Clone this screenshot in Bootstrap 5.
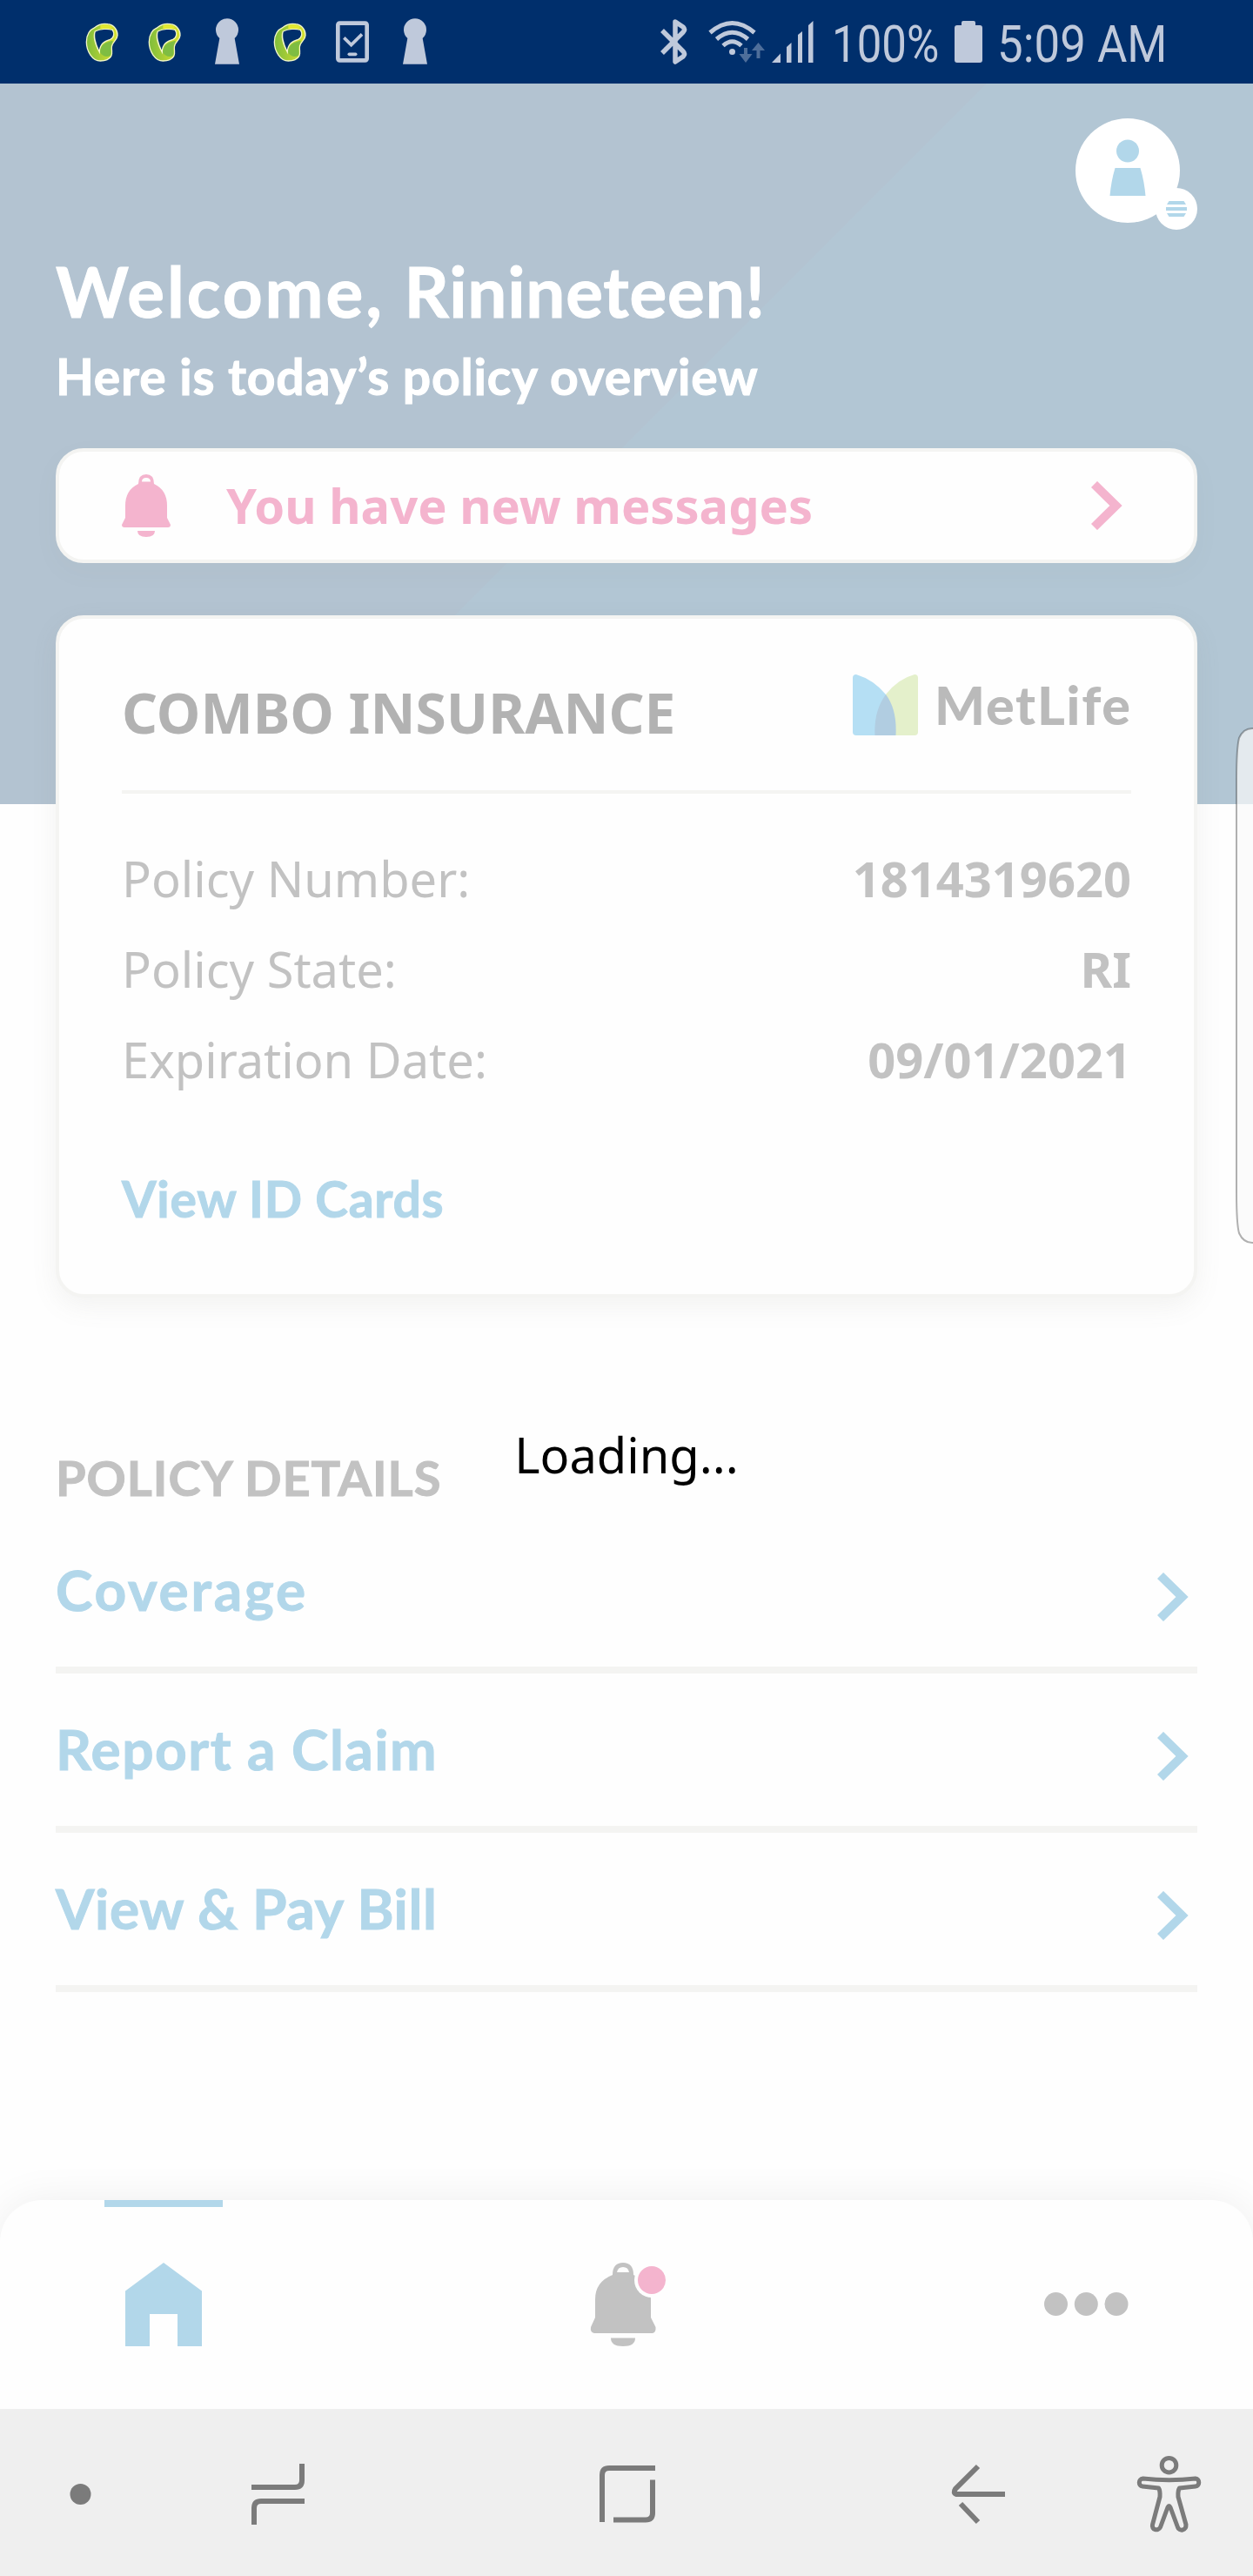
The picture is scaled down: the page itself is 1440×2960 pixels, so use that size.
<!DOCTYPE html>
<html lang="en">
<head>
<meta charset="utf-8">
<meta name="viewport" content="width=device-width, initial-scale=1">
<title>Policy overview</title>
<link href="https://cdn.jsdelivr.net/npm/bootstrap@5.3.0/dist/css/bootstrap.min.css" rel="stylesheet">
<style>
:root{--sky:#b2d7ea;--pink:#f4b4ce;--line:#f4f4f2;--grey:#c2c2c2;--status:#bfc9db}
body{background:#fefefe;font-family:"Noto Sans",sans-serif;font-size:56px;line-height:72px;color:#000}
.screen{width:1440px;height:2960px;overflow:hidden}
svg{display:block;flex:none}
.brand-font{font-family:Lato,sans-serif;font-weight:700;-webkit-text-stroke:1px currentColor}
.statusbar{height:96px;background:#002f6c;color:var(--status);padding-left:81px}
.status-txt{font:400 60px/96px Roboto,sans-serif;transform:scaleX(.85);transform-origin:0 50%;white-space:nowrap}
.pct{width:141px;margin-left:14px;margin-top:3px}
.clock{width:200px;margin-left:17px;margin-top:3px;transform:scaleX(.88)}
.hero{height:828px;padding:40px 64px 0;background:linear-gradient(135deg,#b3c3d1 49.95%,#b2c6d4 50.02%)}
.hero h1{font-size:80px;line-height:96px;margin:30px 0 0;white-space:nowrap;letter-spacing:.8px}
.hero h1 .greet{letter-spacing:3px}
.hero p{font-size:57px;line-height:72px;margin:14px 0 0;white-space:nowrap;letter-spacing:.8px}
.content{padding:0 64px;margin-top:-409px}
.panel{background:#fefefe;border:4px solid var(--line);border-radius:32px;box-shadow:0 10px 30px rgba(120,120,110,.09)}
.message{height:132px;color:var(--pink);padding:0 82px 0 72px;box-shadow:0 10px 30px rgba(120,120,110,.04)}
.message strong{margin-left:64px;padding-bottom:2px}
.policy{height:784px;margin-top:60px;padding:0 72px}
.policy-head{height:201px;border-bottom:4px solid var(--line)}
.policy-head h2{font-size:64px;line-height:80px;font-weight:700;color:#b2b2b2;padding-top:19px;margin:0}
.metlife{font-family:Lato,sans-serif;font-weight:900;font-size:61px;color:#bababa}
.metlife-name{margin:0 -3px 0 19px;letter-spacing:1.8px;width:229px}
.facts{margin:45px 0 0;color:var(--grey);line-height:104px}
.facts dt{font-weight:400}.facts dd{margin:0;font-weight:700}
.idlink{font-size:57px;color:var(--sky);margin-top:72px;text-decoration:none;letter-spacing:.7px}
.details-title{font-size:56px;line-height:72px;margin:171px 0 6px;color:var(--grey);letter-spacing:.95px}
.menu-row{height:183px;border-bottom:8px solid var(--line);font-size:64px;color:var(--sky);text-decoration:none}
.menu-row span{padding-bottom:1px}
.menu-row svg{margin:14px 10px 0 0}
.track-wide{letter-spacing:2.8px}
.track-mid{letter-spacing:1.5px}
.track-slim{letter-spacing:.6px}
.tabs{height:240px;background:#fefefe;border-radius:48px 48px 0 0;box-shadow:0 0 48px rgba(0,0,0,.065);padding:0 124px 0 120px}
.sysbar{height:192px;background:#efefef}
.loading{top:1635px;left:0;width:1440px}
.edge{left:1420px;top:836px}
</style>
</head>
<body>
<div class="screen position-relative d-flex flex-column">
  <header class="statusbar d-flex flex-shrink-0">
    <svg width="0" height="0" class="position-absolute">
      <defs>
        <linearGradient id="lime" x1="0" y1="0" x2="1" y2="0"><stop offset="0" stop-color="#7fbd3c"/><stop offset=".45" stop-color="#a9cd36"/><stop offset="1" stop-color="#d9e22e"/></linearGradient>
        <symbol id="leaf" viewBox="63 0 216 288">
          <path fill-rule="evenodd" fill="url(#lime)" stroke="#f3f7c8" stroke-width="4" d="M148 94C160 84 176 80 192 83C214 86 226 104 225 122C224 140 206 144 205 162C204 176 209 182 203 194C196 206 182 210 166 210C138 210 118 176 118 145C118 120 130 102 148 94ZM148 108C142 122 147 150 163 180C164 150 180 142 200 136C214 130 215 114 208 103C192 98 165 99 148 108Z"/>
          <path fill="#7fbd42" d="M165 180C166 154 184 148 203 142C215 136 206 148 203 160C201 176 206 184 200 192C190 198 174 196 165 180Z"/>
          <path fill="#e2e832" d="M166 88Q186 80 206 92L204 101Q184 96 166 101Z"/>
        </symbol>
        <symbol id="keyhole" viewBox="495 0 216 288"><path fill="#bfc9db" d="M577 132A39 39 0 1 1 629 132L645 221H561Z"/></symbol>
      </defs>
    </svg>
    <svg width="72" height="96"><use href="#leaf"/></svg>
    <svg width="72" height="96"><use href="#leaf"/></svg>
    <svg width="72" height="96"><use href="#keyhole"/></svg>
    <svg width="72" height="96"><use href="#leaf"/></svg>
    <svg width="72" height="96" viewBox="927 0 216 288" fill="none" stroke="#bfc9db"><rect x="985" y="80" width="100" height="128" rx="6" stroke-width="14"/><path d="M1006 130L1031 155L1068 118" stroke-width="11"/><path d="M1024 187H1046" stroke-width="11" stroke-linecap="round"/></svg>
    <svg width="72" height="96"><use href="#keyhole"/></svg>
    <svg width="429" height="96" viewBox="513 0 429 96" fill="none" stroke="#bfc9db">
      <path d="M761 35L785 59Q788 62 785 65L776 71V25L785 31Q788 34 785 37L761 61" stroke-width="5.5" stroke-linejoin="round"/>
      <path d="M816 37.5Q841.5 15.500 867 37.500M823.500 45Q841.500 29.500 859.500 45M831 52.500Q841.500 43 852 52.500" stroke-width="5"/>
      <circle cx="841.500" cy="59.500" r="3.500" fill="#bfc9db" stroke="none"/>
      <path d="M857 55V65M871.500 56V67" stroke="#4e6e9a" stroke-width="4"/>
      <path d="M849.500 62H864.500L857 72ZM864 58H879L871.500 49Z" fill="#4e6e9a" stroke="none"/>
      <path d="M887 72L897 61.500V72ZM904 54L909.500 49V72H904ZM917 40L922 36V72H917ZM929 29L934.500 24V72H929Z" fill="#bfc9db" stroke="none"/>
    </svg>
    <div class="status-txt pct">100%</div>
    <svg width="32" height="96" viewBox="1097 0 32 96"><path fill="#bfc9db" d="M1100 29H1105V26Q1105 24 1107 24H1119Q1121 24 1121 26V29H1126Q1129 29 1129 32V69Q1129 72 1126 72H1100Q1097 72 1097 69V32Q1097 29 1100 29Z"/></svg>
    <div class="status-txt clock">5:09 AM</div>
  </header>

  <section class="hero flex-shrink-0 text-white">
    <div class="d-flex justify-content-end">
      <svg width="140" height="120" viewBox="1236 136 140 120" overflow="visible"><circle cx="1296" cy="196" r="60" fill="#fff"/><circle cx="1296" cy="173.500" r="13" fill="#b2d7ea"/><path d="M1281.500 193H1310.500Q1315 208 1316.500 225H1275.500Q1277 208 1281.500 193Z" fill="#b2d7ea"/><circle cx="1352" cy="240" r="24" fill="#fff"/><path fill="#b2d7ea" d="M1343.500 231H1360.500L1363 235H1341ZM1340 238H1364V242H1340ZM1341 245H1363L1360.500 249H1343.500Z"/></svg>
    </div>
    <h1 class="brand-font"><span class="greet">Welcome, </span>Rinineteen!</h1>
    <p class="brand-font">Here is today’s policy overview</p>
  </section>

  <main class="content position-relative flex-shrink-0">
    <div class="panel message d-flex align-items-center">
      <svg width="56" height="72" viewBox="0 0 56 72"><g fill="#f4b4ce"><path fill-rule="evenodd" d="M19 11Q19 0 28 0T37 11Q52 18 52 36V50L56 58Q56 61 53 61H3Q0 61 0 58L4 50V36Q4 18 19 11ZM23 8.500H33Q33 4 28 4T23 8.500Z"/><path d="M18 65H38Q38 72 28 72T18 65Z"/></g></svg>
      <strong class="me-auto">You have new messages</strong>
      <svg width="36" height="56" viewBox="0 0 36 56"><path d="M3.500 3.500L28.500 28L3.500 52.500" fill="none" stroke="#f4b4ce" stroke-width="10"/></svg>
    </div>

    <article class="panel policy">
      <div class="policy-head d-flex align-items-center justify-content-between">
        <h2>COMBO INSURANCE</h2>
        <div class="metlife d-flex align-items-center">
          <svg width="75" height="70" viewBox="0 0 75 70"><path fill="#b5dff4" d="M0 4Q0 0 4 0Q24 6 38 23V70H4Q0 70 0 66Z"/><path fill="#e4f0cb" d="M75 4Q75 0 71 0Q52 5 38 23V70H71Q75 70 75 66Z"/><path fill="#b1cde1" d="M38 23Q51 40 49.500 70H25.500Q24 42 38 23Z"/></svg>
          <span class="metlife-name">MetLife</span>
        </div>
      </div>
      <dl class="facts">
        <div class="d-flex justify-content-between"><dt>Policy Number:</dt><dd>1814319620</dd></div>
        <div class="d-flex justify-content-between"><dt>Policy State:</dt><dd>RI</dd></div>
        <div class="d-flex justify-content-between"><dt>Expiration Date:</dt><dd>09/01/2021</dd></div>
      </dl>
      <a href="#" class="idlink brand-font d-block">View ID Cards</a>
    </article>

    <h3 class="details-title brand-font">POLICY DETAILS</h3>
    <nav>
      <a href="#" class="menu-row brand-font d-flex align-items-center justify-content-between"><span class="track-wide">Coverage</span><svg width="36" height="56" viewBox="0 0 36 56"><path d="M3.500 3.500L28.500 28L3.500 52.500" fill="none" stroke="#b2d7ea" stroke-width="10"/></svg></a>
      <a href="#" class="menu-row brand-font d-flex align-items-center justify-content-between"><span class="track-mid">Report a Claim</span><svg width="36" height="56" viewBox="0 0 36 56"><path d="M3.500 3.500L28.500 28L3.500 52.500" fill="none" stroke="#b2d7ea" stroke-width="10"/></svg></a>
      <a href="#" class="menu-row brand-font d-flex align-items-center justify-content-between"><span class="track-slim">View &amp; Pay Bill</span><svg width="36" height="56" viewBox="0 0 36 56"><path d="M3.500 3.500L28.500 28L3.500 52.500" fill="none" stroke="#b2d7ea" stroke-width="10"/></svg></a>
    </nav>
  </main>

  <nav class="tabs mt-auto flex-shrink-0 d-flex justify-content-between">
    <svg width="136" height="240" viewBox="120 2528 136 240" fill="#b2d7ea"><path d="M120 2528H256V2536H120ZM144 2632.500L188 2600L232 2632.500V2696H204V2659H172V2696H144Z"/></svg>
    <svg width="136" height="240" viewBox="650 2528 136 240"><g fill="#c2c2c2"><path fill-rule="evenodd" d="M704 2614Q704 2600 716 2600T728 2614Q748 2623 748 2642V2663L753.500 2674Q754 2680 750 2681H683Q678 2680 679 2674L684 2663V2642Q684 2622 704 2614ZM709 2611H723Q722 2605 716 2605T709 2611Z"/><path d="M702 2686.500H730Q730 2696 716 2696T702 2686.500Z"/></g><circle cx="749" cy="2620" r="20" fill="#fefefe"/><circle cx="749" cy="2620" r="16" fill="#f4b4ce"/></svg>
    <svg width="136" height="240" viewBox="1180 2528 136 240" fill="#c2c2c2"><circle cx="1213.500" cy="2647.500" r="13.500"/><circle cx="1248.300" cy="2647.500" r="13.500"/><circle cx="1283" cy="2647.500" r="13.500"/></svg>
  </nav>

  <footer class="sysbar d-flex flex-shrink-0">
    <svg width="185" height="192" viewBox="0 2768 185 192"><circle cx="92.500" cy="2866" r="12" fill="#7b7b7b"/></svg>
    <svg width="270" height="192" viewBox="185 2768 270 192" fill="none" stroke="#7b7b7b" stroke-width="6"><path d="M347 2831V2850Q347 2858 339 2858H289M350 2874H300Q292 2874 292 2882V2901"/></svg>
    <svg width="530" height="192" viewBox="455 2768 530 192" fill="none" stroke="#7b7b7b" stroke-width="6"><path d="M692 2898V2844Q692 2836 700 2836H753M705 2895.500H742Q750 2895.500 750 2887.500V2849.500"/></svg>
    <svg width="282" height="192" viewBox="985 2768 282 192" fill="none" stroke="#7b7b7b" stroke-width="6"><path d="M1155 2866H1099Q1095 2864.500 1098 2860L1124 2834M1104 2877L1124 2898"/></svg>
    <svg width="173" height="192" viewBox="1267 2768 173 192" fill="none" stroke="#7b7b7b" stroke-width="5" stroke-linejoin="round"><circle cx="1343.500" cy="2832.700" r="8.300"/><path d="M1313.500 2848Q1343.500 2851.500 1374 2848C1379 2848.500 1379 2856.500 1374 2857L1355.500 2859Q1353.500 2862 1354 2869L1363 2901C1363.500 2908 1355 2909 1353.500 2904L1345 2881Q1343.500 2878 1342 2881L1333.500 2904C1331 2909 1323 2907 1324.500 2901L1333 2869Q1333.500 2862 1331.500 2859L1313 2857C1308 2856.500 1308 2848.500 1313.500 2848Z"/></svg>
  </footer>

  <div class="loading position-absolute text-center">Loading...</div>
  <svg class="edge position-absolute" width="20" height="594" viewBox="0 0 20 594"><path d="M21 1H19Q9 1 4 12Q1 24 1 60V534Q1 570 4 581Q9 592 19 592H21" fill="#fafafa" fill-opacity=".7" stroke="#000" stroke-opacity=".3" stroke-width="2"/></svg>
</div>
<script src="https://cdn.jsdelivr.net/npm/bootstrap@5.3.0/dist/js/bootstrap.bundle.min.js"></script>
</body>
</html>
